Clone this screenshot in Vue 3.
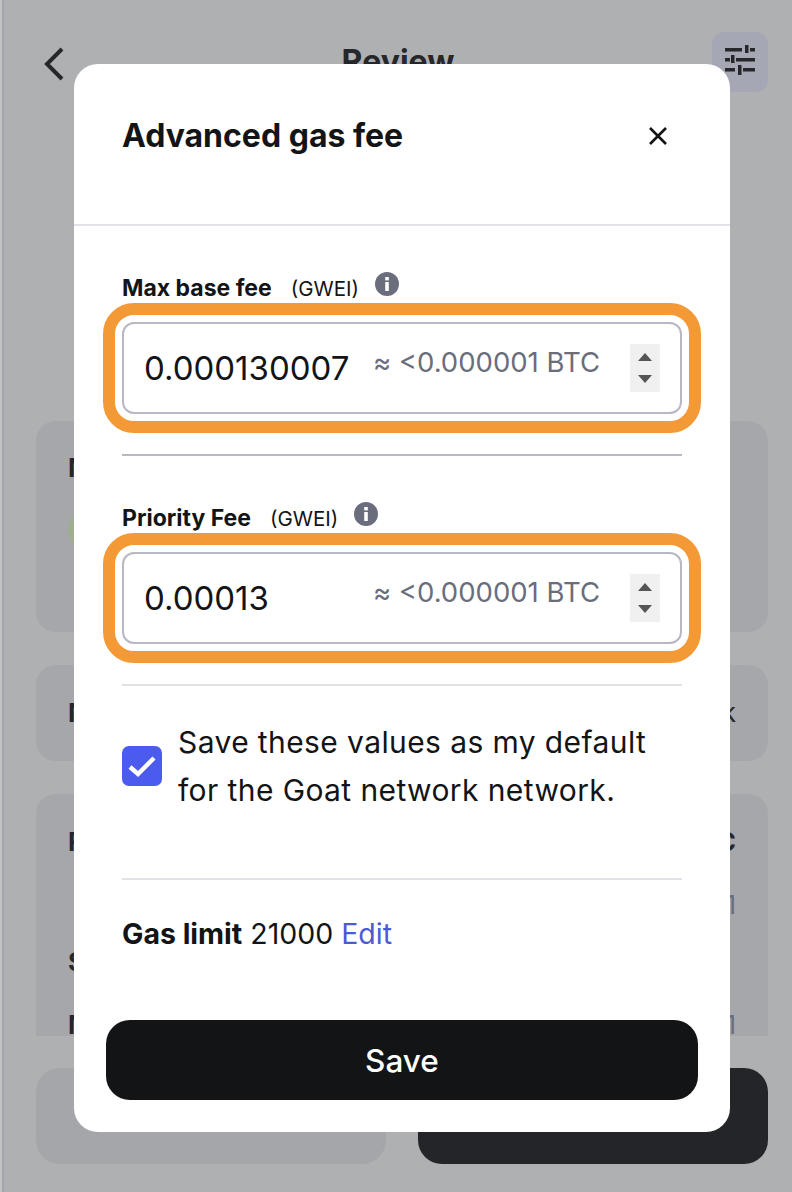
<script setup>
const fields = [
  { label: 'Max base fee', unit: '(GWEI)', value: '0.000130007', fiat: '≈ <0.000001 BTC', ruleClass: 'rule-dark' },
  { label: 'Priority Fee', unit: '(GWEI)', value: '0.00013', fiat: '≈ <0.000001 BTC', ruleClass: 'rule-light' },
]
</script>

<template>
  <div class="screen">
    <div class="edge"></div>
    <main class="page">
      <header class="topbar">
        <svg class="back" width="20" height="34" viewBox="0 0 20 34" fill="none">
          <path d="M18 2 L3 17 L18 32" stroke="#26272a" stroke-width="4" />
        </svg>
        <h1 class="page-title">Review</h1>
        <button class="tune">
          <svg width="30" height="30" viewBox="0 0 30 30" fill="#26272a">
            <rect x="0" y="3" width="17" height="3.5" />
            <rect x="20" y="0" width="3.5" height="8" />
            <rect x="25" y="3" width="5" height="3.5" />
            <rect x="0" y="13" width="5" height="3.5" />
            <rect x="6" y="10" width="3.5" height="8" />
            <rect x="11" y="13" width="19" height="3.5" />
            <rect x="0" y="23" width="10" height="3.5" />
            <rect x="13" y="20" width="3.5" height="10" />
            <rect x="18" y="23" width="12" height="3.5" />
          </svg>
        </button>
      </header>

      <div class="scroll">
        <section class="card card-a">
          <p class="row-text strong">Network</p>
          <div class="chain"><span class="dot"></span><span class="row-text">Goat network</span></div>
        </section>
        <section class="card card-b">
          <p class="row-text strong">Network</p>
          <p class="row-text">Goat network</p>
        </section>
        <section class="card card-c">
          <div class="line first"><span class="row-text strong">Fee</span><span class="row-text strong">0.000001 BTC</span></div>
          <div class="line second"><span></span><span class="row-text muted">$0.01</span></div>
          <div class="line third"><span class="row-text strong">Speed</span></div>
          <div class="line fourth"><span class="row-text strong">Max fee</span><span class="row-text muted">$0.01</span></div>
        </section>
      </div>

      <footer class="actions">
        <button class="act act-light"></button>
        <button class="act act-dark"></button>
      </footer>
    </main>

    <div class="overlay">
      <div class="modal">
        <div class="modal-head">
          <h2>Advanced gas fee</h2>
          <svg width="22" height="22" viewBox="0 0 22 22" fill="none">
            <path d="M3 3 L19 19 M19 3 L3 19" stroke="#131416" stroke-width="2.6" />
          </svg>
        </div>

        <div class="modal-body">
          <template v-for="f in fields" :key="f.label">
            <div class="label-row">
              <span class="label">{{ f.label }}</span>
              <span class="unit">{{ f.unit }}</span>
              <svg class="info" width="24" height="24" viewBox="0 0 24 24">
                <circle cx="12" cy="12" r="12" fill="#6a6d7c" />
                <rect x="10.2" y="10" width="3.6" height="9" fill="#fff" />
                <rect x="10.2" y="5" width="3.6" height="3.4" fill="#fff" />
              </svg>
            </div>
            <div class="ring">
              <div class="input">
                <span class="value">{{ f.value }}</span>
                <span class="fiat">{{ f.fiat }}</span>
                <span class="spin">
                  <i class="up"></i>
                  <i class="down"></i>
                </span>
              </div>
            </div>
            <div class="rule" :class="f.ruleClass"></div>
          </template>

          <div class="save-default">
            <span class="check">
              <svg width="30" height="24" viewBox="0 0 30 24" fill="none">
                <path d="M3 13 L11 20 L27 4" stroke="#fff" stroke-width="4.4" />
              </svg>
            </span>
            <p>Save these values as my default<br />for the Goat network network.</p>
          </div>

          <div class="rule rule-light rule-low"></div>

          <p class="gas"><b>Gas limit</b> 21000 <a>Edit</a></p>

          <button class="save">Save</button>
        </div>
      </div>
    </div>
  </div>
</template>

<style scoped>
.screen {
  position: relative;
  display: flex;
  width: 792px;
  height: 1192px;
  overflow: hidden;
  background: #afb0b2;
  font-family: Inter, "Liberation Sans", sans-serif;
  color: #131416;
}
.edge {
  flex: none;
  width: 2px;
  background: #c2c3c2;
  border-right: 2px solid #a2a3ad;
}
.page {
  flex: 1;
  min-width: 0;
  display: flex;
  flex-direction: column;
  background: #afb0b2;
}
.topbar {
  flex: none;
  height: 136px;
  padding: 32px 24px 0 40px;
  box-sizing: border-box;
  display: flex;
  justify-content: space-between;
  align-items: flex-start;
}
.back {
  margin-top: 15px;
}
.page-title {
  margin: 12px 0 0 20px;
  font-size: 32px;
  line-height: 36px;
  font-weight: 700;
  color: #26272a;
}
.tune {
  width: 56px;
  height: 60px;
  padding: 0;
  border: 0;
  border-radius: 12px;
  background: #a6a7b4;
  display: flex;
  align-items: center;
  justify-content: center;
}
.tune svg {
  margin-bottom: 4px;
}
.scroll {
  flex: none;
  height: 900px;
  overflow: hidden;
  padding: 285px 24px 0 32px;
  box-sizing: border-box;
  display: flex;
  flex-direction: column;
  gap: 33px;
}
.card {
  flex: none;
  border-radius: 20px;
  background: #a6a7aa;
  padding: 0 32px;
  box-sizing: border-box;
}
.row-text {
  margin: 0;
  font-size: 26px;
  line-height: 32px;
  white-space: nowrap;
  color: #26272a;
}
.strong {
  font-weight: 700;
}
.muted {
  color: #6a6d7c;
}
.card-a {
  height: 211px;
  padding-top: 31px;
}
.chain {
  display: flex;
  align-items: center;
  gap: 10px;
  margin-top: 26px;
}
.dot {
  width: 40px;
  height: 40px;
  border-radius: 50%;
  background: #9fae8e;
}
.card-b {
  height: 96px;
  display: flex;
  align-items: center;
  justify-content: space-between;
}
.card-c {
  height: 300px;
}
.line {
  display: flex;
  justify-content: space-between;
}
.first {
  padding-top: 32px;
}
.second {
  margin-top: 31px;
}
.third {
  margin-top: 25px;
}
.fourth {
  margin-top: 31px;
}
.actions {
  position: relative;
  flex: none;
  height: 156px;
  padding: 32px 24px 0 32px;
  box-sizing: border-box;
  display: flex;
  gap: 32px;
  background: #afb0b2;
}
.act {
  flex: 1;
  height: 96px;
  border: 0;
  border-radius: 24px;
}
.act-light {
  background: #a5a6a9;
}
.act-dark {
  background: #242528;
}
.overlay {
  position: absolute;
  inset: 0;
}
.modal {
  width: 656px;
  margin: 64px 0 0 74px;
  border-radius: 24px;
  background: #fff;
}
.modal-head {
  height: 162px;
  box-sizing: border-box;
  padding: 48px 61px 0 48px;
  display: flex;
  justify-content: space-between;
  align-items: flex-start;
  border-bottom: 2px solid #e2e2e8;
}
.modal-head h2 {
  margin: 0;
  font-size: 32px;
  line-height: 48px;
  font-weight: 700;
}
.modal-head svg {
  margin-top: 13px;
}
.modal-body {
  padding: 48px 48px 32px;
}
.label-row {
  height: 28px;
  display: flex;
  align-items: center;
}
.label {
  font-size: 23px;
  font-weight: 700;
}
.unit {
  margin-left: 19px;
  font-size: 20.5px;
}
.info {
  margin: -8px 0 0 16px;
}
.ring {
  margin-top: 20px;
  border-radius: 12px;
  outline: 12px solid #f39a37;
  outline-offset: 7px;
}
.input {
  height: 92px;
  box-sizing: border-box;
  border: 2px solid #b7b8c4;
  border-radius: 12px;
  padding: 0 20px;
  display: flex;
  align-items: center;
}
.value {
  flex: 1;
  font-size: 33px;
}
.fiat {
  margin-bottom: 12px;
  font-size: 27.5px;
  color: #6a6d7c;
}
.spin {
  width: 30px;
  height: 48px;
  margin-left: 30px;
  background: #f0f0f0;
  display: flex;
  flex-direction: column;
  align-items: center;
  justify-content: center;
  gap: 14px;
}
.spin i {
  width: 0;
  height: 0;
  border-left: 7px solid transparent;
  border-right: 7px solid transparent;
}
.up {
  border-bottom: 8px solid #555;
}
.down {
  border-top: 8px solid #555;
}
.rule {
  height: 2px;
  margin: 40px 0 48px;
}
.rule-dark {
  background: #b7b8c4;
}
.rule-light {
  background: #e2e2e6;
}
.rule-low {
  margin: 64px 0 36px;
}
.save-default {
  margin-top: -16px;
  display: flex;
  align-items: center;
  gap: 16px;
}
.check {
  flex: none;
  width: 40px;
  height: 40px;
  border-radius: 7px;
  background: #4a5bed;
  display: flex;
  align-items: center;
  justify-content: center;
}
.save-default p {
  margin: 0;
  font-size: 30px;
  line-height: 48px;
  letter-spacing: 0.4px;
}
.gas {
  margin: 0;
  font-size: 28.5px;
  line-height: 36px;
}
.gas a {
  color: #4a5bd6;
}
.save {
  display: block;
  width: 592px;
  height: 80px;
  margin: 68px -16px 0;
  border: 0;
  border-radius: 24px;
  background: #131416;
  color: #fff;
  font-family: inherit;
  font-size: 31.5px;
  font-weight: 500;
}
</style>
